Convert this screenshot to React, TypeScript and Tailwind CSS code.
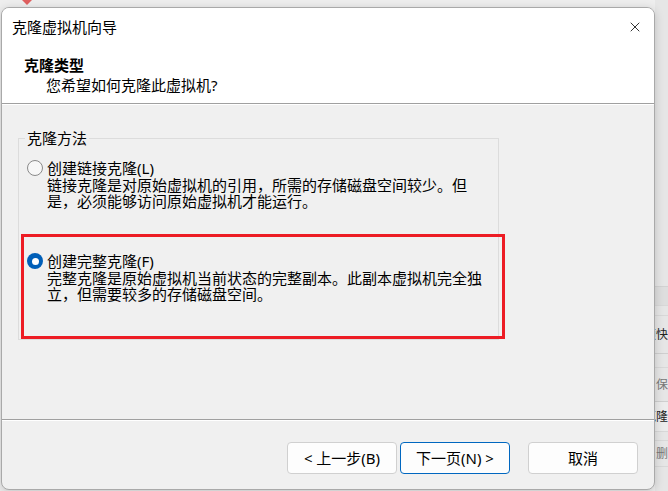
import { X } from "lucide-react"

const font = "font-['Noto_Sans','Noto_Sans_CJK_SC',sans-serif]"

function Radio({ checked }: { checked?: boolean }) {
  if (checked) {
    return (
      <span className="flex h-4 w-4 items-center justify-center rounded-full bg-[#005fb8]">
        <span className="h-[7px] w-[7px] rounded-full bg-white" />
      </span>
    )
  }
  return <span className="h-4 w-4 rounded-full border border-[#8a8a8a] bg-[#f7f7f7]" />
}

interface OptionProps {
  checked?: boolean
  label: string
  hotkey: string
  lines: string[]
}

function CloneOption({ checked, label, hotkey, lines }: OptionProps) {
  return (
    <div className="flex items-start gap-1">
      <div className="flex h-[18px] items-center">
        <Radio checked={checked} />
      </div>
      <div className="flex flex-col">
        <span className="leading-[18px]">
          {label}({hotkey})
        </span>
        {lines.map((line) => (
          <span key={line} className="whitespace-nowrap leading-[16px]">
            {line}
          </span>
        ))}
      </div>
    </div>
  )
}

function Button({
  children,
  primary,
}: {
  children: React.ReactNode
  primary?: boolean
}) {
  return (
    <button
      className={
        primary
          ? "h-8 w-[110px] rounded-[4px] border border-[#0067c0] bg-[#fdfdfd] text-[15px] text-black"
          : "h-8 w-[110px] rounded-[4px] border border-[#d0d0d0] bg-[#fdfdfd] text-[15px] text-black"
      }
    >
      {children}
    </button>
  )
}

function Backdrop() {
  return (
    <div className="flex h-full w-full">
      <div className="flex flex-1 flex-col bg-[#eeeeee]">
        <div className="flex h-[7px] pl-[22px]">
          <span className="h-0 w-0 border-x-[5px] border-t-[5px] border-x-transparent border-t-[#e06060]" />
        </div>
      </div>
      <div className="flex w-[13px] flex-col bg-[#e6e6e6] text-[12px]">
        <div className="h-[286px]" />
        <div className="h-[19px] border-t border-[#d2d2d2] bg-[#dedede]" />
        <div className="h-[10px] border-t border-[#d8d8d8]" />
        <div className="flex h-[38px] items-center justify-end overflow-hidden whitespace-nowrap border-t border-[#d8d8d8] text-[#222]">
          颍快
        </div>
        <div className="h-[14px] border-t border-[#cfcfcf]" />
        <div className="flex h-[34px] items-center justify-end overflow-hidden whitespace-nowrap border-t border-[#d8d8d8] text-[#777]">
          保
        </div>
        <div className="flex h-[30px] items-center justify-end overflow-hidden whitespace-nowrap border-t border-[#cfcfcf] bg-[#ececec] text-[#222]">
          克隆
        </div>
        <div className="h-[9px] border-t border-[#d8d8d8]" />
        <div className="flex h-[26px] items-center justify-end overflow-hidden whitespace-nowrap border-t border-[#d8d8d8] text-[#777]">
          删
        </div>
        <div className="flex-1 border-t border-[#d8d8d8]" />
      </div>
    </div>
  )
}

export default function App() {
  return (
    <div className={`relative h-[491px] w-[668px] overflow-hidden text-[15px] text-black ${font}`}>
      <Backdrop />

      <div className="absolute left-[1px] top-[7px] flex h-[483px] w-[654px] flex-col overflow-hidden rounded-[8px] border border-[#a9a9a9] bg-[#f0f0f0] shadow-[0_2px_10px_rgba(0,0,0,0.18)]">
        <div className="flex flex-col border-b border-[#a0a0a0] bg-white">
          <div className="flex h-[38px] items-center justify-between pl-[10px] pr-[11px]">
            <span className="leading-[20px]">克隆虚拟机向导</span>
            <X size={16} strokeWidth={1.2} className="text-black" />
          </div>
          <div className="flex flex-col pb-[8px] pt-[9px]">
            <span className="pl-[22px] font-bold leading-[20px]">克隆类型</span>
            <span className="pl-[44px] leading-[20px]">您希望如何克隆此虚拟机?</span>
          </div>
        </div>

        <div className="flex flex-1 flex-col border-t border-white">
          <fieldset className="ml-[16px] mt-[23px] h-[212px] w-[481px] border border-[#dcdcdc]">
            <legend className="ml-[6px] px-[2px] leading-[20px]">克隆方法</legend>
            <div className="flex flex-col gap-[43px] pl-[8px] pt-[11px]">
              <CloneOption
                label="创建链接克隆"
                hotkey="L"
                lines={[
                  "链接克隆是对原始虚拟机的引用，所需的存储磁盘空间较少。但",
                  "是，必须能够访问原始虚拟机才能运行。",
                ]}
              />
              <CloneOption
                checked
                label="创建完整克隆"
                hotkey="F"
                lines={[
                  "完整克隆是原始虚拟机当前状态的完整副本。此副本虚拟机完全独",
                  "立，但需要较多的存储磁盘空间。",
                ]}
              />
            </div>
          </fieldset>
        </div>

        <div className="flex flex-col border-t border-[#a0a0a0]">
          <div className="flex justify-end border-t border-white pb-[15px] pr-[16px] pt-[21px]">
            <div className="flex gap-[3px]">
              <Button>&lt; 上一步(B)</Button>
              <Button primary>下一页(N) &gt;</Button>
            </div>
            <div className="ml-[18px]">
              <Button>取消</Button>
            </div>
          </div>
        </div>
      </div>

      <div className="pointer-events-none absolute left-[21px] top-[234px] h-[105px] w-[484px] border-[3px] border-[#ed1c24]" />
    </div>
  )
}
